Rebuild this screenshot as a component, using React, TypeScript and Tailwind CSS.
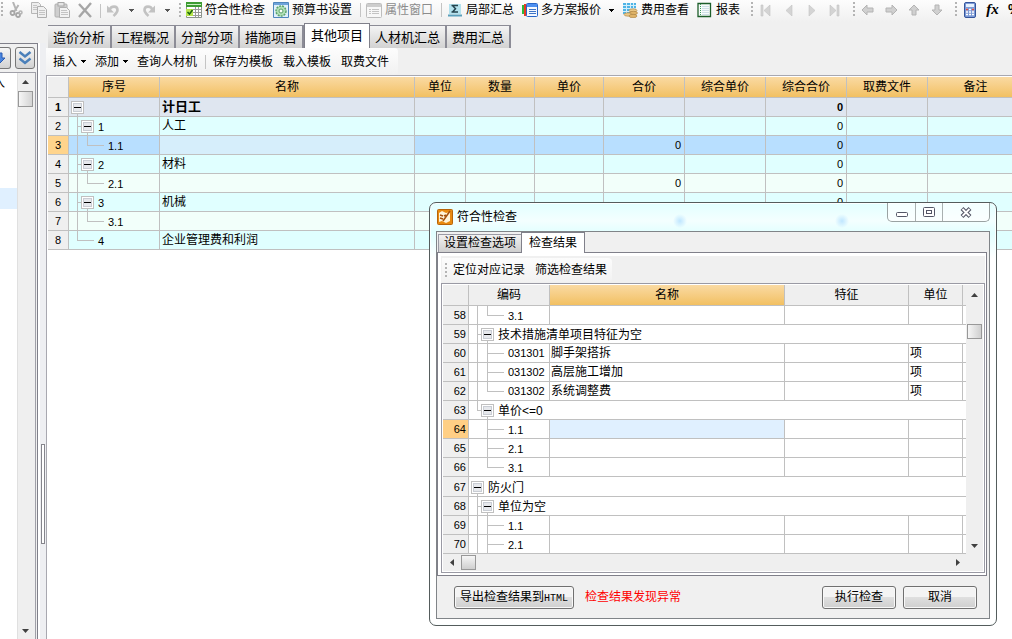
import React, { useState } from 'react';

interface CostRow {
  no: number;
  guides: string;
  toggle: boolean;
  code: string;
  name: string;
  total?: string;
  compositeTotal: string;
  style: 'head' | 'group' | 'selected' | 'item';
}

interface CheckRow {
  no: number;
  guides: string;
  toggle: boolean;
  code: string;
  name?: string;
  unit?: string;
}

const costRows: CostRow[] = [
  { no: 1, guides: '', toggle: true, code: '', name: '计日工', compositeTotal: '0', style: 'head' },
  { no: 2, guides: 'T', toggle: true, code: '1', name: '人工', compositeTotal: '0', style: 'group' },
  { no: 3, guides: '|L', toggle: false, code: '1.1', name: '', total: '0', compositeTotal: '0', style: 'selected' },
  { no: 4, guides: 'T', toggle: true, code: '2', name: '材料', compositeTotal: '0', style: 'group' },
  { no: 5, guides: '|L', toggle: false, code: '2.1', name: '', total: '0', compositeTotal: '0', style: 'item' },
  { no: 6, guides: 'T', toggle: true, code: '3', name: '机械', compositeTotal: '0', style: 'group' },
  { no: 7, guides: '|L', toggle: false, code: '3.1', name: '', total: '0', compositeTotal: '0', style: 'item' },
  { no: 8, guides: 'L', toggle: false, code: '4', name: '企业管理费和利润', compositeTotal: '0', style: 'group' },
];

const checkRows: CheckRow[] = [
  { no: 58, guides: '|L', toggle: false, code: '3.1' },
  { no: 59, guides: 'T', toggle: true, code: '技术措施清单项目特征为空' },
  { no: 60, guides: '|T', toggle: false, code: '031301', name: '脚手架搭拆', unit: '项' },
  { no: 61, guides: '|T', toggle: false, code: '031302', name: '高层施工增加', unit: '项' },
  { no: 62, guides: '|L', toggle: false, code: '031302', name: '系统调整费', unit: '项' },
  { no: 63, guides: 'L', toggle: true, code: '单价<=0' },
  { no: 64, guides: ' T', toggle: false, code: '1.1' },
  { no: 65, guides: ' T', toggle: false, code: '2.1' },
  { no: 66, guides: ' L', toggle: false, code: '3.1' },
  { no: 67, guides: '', toggle: true, code: '防火门' },
  { no: 68, guides: 'T', toggle: true, code: '单位为空' },
  { no: 69, guides: '|T', toggle: false, code: '1.1' },
  { no: 70, guides: '|T', toggle: false, code: '2.1' },
];

const tabs = ['造价分析', '工程概况', '分部分项', '措施项目', '其他项目', '人材机汇总', '费用汇总'];

const costHeaders = ['序号', '名称', '单位', '数量', '单价', '合价', '综合单价', '综合合价', '取费文件', '备注'];

const getRowColor = (style: CostRow['style']) => {
  switch (style) {
    case 'head':
      return 'bg-[#dfe6f0] font-bold';
    case 'selected':
      return 'bg-[#b8dfff]';
    case 'item':
      return 'bg-[#f2fffa]';
    default:
      return 'bg-[#e0ffff]';
  }
};

const ORANGE = 'bg-linear-to-b from-[#fadaa2] to-[#f2c061]';
const CELL = 'border-r border-b border-[#c0c0c0] p-0 leading-[18px] whitespace-nowrap';

/* Guide lines and expander of one tree node, one guide every 10px */
const TreeLines: React.FC<{ guides: string; toggle: boolean }> = ({ guides, toggle }) => {
  const depth = guides.length;
  const cx = 8 + depth * 10;
  return (
    <svg width={19 + depth * 10} height="18" className="shrink-0" shapeRendering="crispEdges">
      {guides.split('').map((g, i) => {
        const x = 8 + i * 10;
        const end = toggle ? x + 4 : x + 16;
        return (
          <g key={i} fill="#c0c0c0">
            {g !== ' ' && <rect x={x} y="0" width="1" height={g === 'L' ? 10 : 18} />}
            {(g === 'L' || g === 'T') && <rect x={x} y="9" width={end - x + 1} height="1" />}
          </g>
        );
      })}
      {toggle && (
        <g>
          <rect x={cx} y="15" width="1" height="3" fill="#c0c0c0" />
          <rect x={cx - 6} y="3" width="13" height="13" fill="#c0c0c0" />
          <rect x={cx - 5} y="4" width="11" height="11" fill="#fff" />
          <rect x={cx - 4} y="5" width="9" height="9" fill="#c9cdd4" />
          <rect x={cx - 3} y="6" width="7" height="7" fill="#e6e8ec" />
          <rect x={cx - 3} y="9" width="7" height="1" fill="#000" />
        </g>
      )}
    </svg>
  );
};

const Caret = () => (
  <svg width="5" height="3" shapeRendering="crispEdges">
    <path d="M0 0h5v1H4v1H3v1H2V2H1V1H0z" fill="currentColor" />
  </svg>
);

const ScrollArrow: React.FC<{ dir: 'up' | 'down' | 'left' | 'right' }> = ({ dir }) => {
  const paths = { up: 'M1 6l3.5-4L8 6z', down: 'M1 3l3.5 4L8 3z', left: 'M6 1L2 4.5 6 8z', right: 'M3 1l4 3.5L3 8z' };
  return (
    <svg width="9" height="9" viewBox="0 0 9 9">
      <path d={paths[dir]} fill="#404040" />
    </svg>
  );
};

const Grip = () => (
  <svg width="4" height="18" className="shrink-0 text-[#b4b4b4]" shapeRendering="crispEdges">
    {[2, 6, 10, 14].map((y) => (
      <rect key={y} x="1" y={y} width="2" height="2" fill="currentColor" />
    ))}
  </svg>
);

const Separator = () => <div className="ml-1 mr-px h-3.5 w-px shrink-0 bg-[#c4c4c4]" />;

const IconButton: React.FC<{ label: string; children: React.ReactNode }> = ({ label, children }) => (
  <button aria-label={label} className="flex h-5 w-[23px] shrink-0 items-center justify-center">
    {children}
  </button>
);

const ToolItem: React.FC<{ label: string; icon: React.ReactNode; disabled?: boolean; menu?: boolean }> = ({
  label,
  icon,
  disabled,
  menu,
}) => (
  <button
    disabled={disabled}
    className={`flex h-5 shrink-0 items-center gap-[3px] px-1 leading-5 whitespace-nowrap ${disabled ? 'text-[#8c8c8c]' : ''}`}
  >
    {icon}
    {label}
    {menu && (
      <span className="flex w-2.5 justify-end">
        <Caret />
      </span>
    )}
  </button>
);

const Icon: React.FC<{ children: React.ReactNode }> = ({ children }) => (
  <svg width="16" height="16" viewBox="0 0 16 16" fill="none" className="shrink-0">
    {children}
  </svg>
);

const CutIcon = () => (
  <Icon>
    <path d="M5 0l3.500 9M10.500 3L6 10" stroke="#b4b4b4" strokeWidth="2" />
    <circle cx="4.500" cy="11" r="2" stroke="#a6a6a6" strokeWidth="1.800" />
    <circle cx="10" cy="13" r="2" stroke="#a6a6a6" strokeWidth="1.800" />
    <circle cx="12.500" cy="10.500" r="1.500" stroke="#b4b4b4" strokeWidth="1.500" />
  </Icon>
);

const CopyIcon = () => (
  <Icon>
    <path d="M.5.5h7l2 2v9h-9z" fill="#ededed" stroke="#b6b6b6" />
    <path d="M6.500 4.500h6l3 3v8h-9z" fill="#f0f0f0" stroke="#aeaeae" />
    <path d="M8 8.500h6M8 10.500h6M8 12.500h6M2 3.500h4M2 5.500h4M2 7.500h4" stroke="#c4c4c4" />
  </Icon>
);

const PasteIcon = () => (
  <Icon>
    <rect x="1" y="2" width="12" height="13" rx="1" fill="#cfcfcf" stroke="#b0b0b0" />
    <rect x="4" y=".5" width="6" height="3.500" fill="#e4e4e4" stroke="#a8a8a8" />
    <path d="M5.500 5.500h7l3 3v7h-10z" fill="#f2f2f2" stroke="#b0b0b0" />
    <path d="M7 8.500h6M7 10.500h7M7 12.500h7" stroke="#c4c4c4" />
  </Icon>
);

const DeleteIcon = () => (
  <Icon>
    <path d="M2 2l12 13M14 1L2 15" stroke="#a6a6a6" strokeWidth="2.400" />
  </Icon>
);

const UndoIcon: React.FC<{ flip?: boolean }> = ({ flip }) => (
  <svg width="16" height="16" viewBox="0 0 16 16" fill="none" className={flip ? '-scale-x-100' : ''}>
    <path d="M2 3.500v7h7z" fill="#c2c2c2" />
    <path d="M4.500 8C6 3.500 12.500 3.500 12.500 8c0 2.500-2 4-4 6" stroke="#c2c2c2" strokeWidth="2.600" />
  </svg>
);

const CheckTableIcon = () => (
  <Icon>
    <path d="M.5.5h15v15H.5z" fill="#fff" stroke="#8c948c" />
    <path d="M0 0h16v5H0z" fill="#3c9b32" />
    <path d="M1 2.500h14" stroke="#cdeec4" />
    <path d="M6 7.500h9M6 10.500h9M6 13.500h9M9.500 5v10M12.500 5v10" stroke="#9a9a9a" />
    <path d="M0 7h7v7H0z" fill="#b6e64c" />
    <path d="M1.500 10l2 2 3-4" stroke="#1a6410" strokeWidth="1.500" />
  </Icon>
);

const SettingsIcon = () => (
  <Icon>
    <path d="M.5.5h15v15H.5z" fill="#e0f0fb" stroke="#4f86bc" />
    <path d="M1 1h14v2H1z" fill="#6ea3da" />
    <circle cx="8" cy="9" r="5" fill="#b2dfb6" stroke="#5ba46c" strokeDasharray="2 1" strokeWidth="1.500" />
    <circle cx="8" cy="9" r="2" fill="#fff" stroke="#58a068" />
  </Icon>
);

const PropertyIcon = () => (
  <Icon>
    <rect x=".5" y="1.500" width="15" height="14" rx="1" fill="#f8f8f8" stroke="#bdbdbd" />
    <path d="M1 2h14v3H1z" fill="#cdcdcd" />
    <path d="M3 7.500h2M6 7.500h7M3 9.500h2M6 9.500h7M3 11.500h2M6 11.500h7" stroke="#c4c4c4" />
  </Icon>
);

const SumIcon = () => (
  <Icon>
    <path d="M2 2h12v10H2z" fill="#b4e2ee" />
    <path d="M1 12.500h14v2H1z" fill="#5aa0bc" />
    <path d="M4.500 3.500h6.500M4.500 10h6.500M5.500 3.500l3 3.300-3 3.200" stroke="#24434e" strokeWidth="1.500" />
  </Icon>
);

const PlansIcon = () => (
  <Icon>
    <path d="M0 3h2v9H0z" fill="#2fb93a" />
    <path d="M2 2h2v12H2z" fill="#e53a26" />
    <path d="M4 2h1v12H4z" fill="#f0c020" />
    <rect x="4.500" y="1.500" width="11" height="13" rx="1" fill="#f4f8ff" stroke="#2765c8" />
    <path d="M5 2h10v3H5z" fill="#4d8ff0" />
    <path d="M7 7.500h7M7 9.500h7M7 11.500h7" stroke="#3f74c6" />
  </Icon>
);

const CoinsIcon = () => (
  <Icon>
    <path d="M1 1h13v11H1z" fill="#4fb4e6" />
    <path d="M1 3.500h13M1 6.500h13M1 9.500h13M4.500 1v11M8.500 1v11M11.500 1v11" stroke="#d4effb" />
    <ellipse cx="11" cy="8.500" rx="4" ry="1.700" fill="#ecc988" stroke="#a87e3c" strokeWidth=".6" />
    <ellipse cx="11.500" cy="11" rx="4" ry="1.700" fill="#e0b468" stroke="#a87e3c" strokeWidth=".6" />
    <ellipse cx="6" cy="12.500" rx="4" ry="1.700" fill="#ecc988" stroke="#a87e3c" strokeWidth=".6" />
    <ellipse cx="11" cy="14" rx="4" ry="1.700" fill="#e0b468" stroke="#a87e3c" strokeWidth=".6" />
  </Icon>
);

const ReportIcon = () => (
  <Icon>
    <path d="M1 1.500h12.500v13H1z" fill="#f6fcfa" stroke="#1d5e2a" strokeWidth="1.300" />
    <path d="M3.500 2v12" stroke="#3c9b5a" strokeDasharray="1 1" />
    <path d="M5 4.500h7M5 6.500h7M5 8.500h7M5 10.500h7M5 12.500h7" stroke="#cfdfe8" />
  </Icon>
);

const navIcons = [
  { label: 'First', d: 'M3 3h2v11H3zM12 3v11L6 8.5z' },
  { label: 'Previous', d: 'M11 3v11L5 8.5z' },
  { label: 'Next', d: 'M5 3v11l6-5.500z' },
  { label: 'Last', d: 'M3 3v11l6-5.500zM10 3h2v11h-2z' },
];

const moveIcons = [
  { label: 'Left', d: 'M7 3v3h6v4H7v3L2 8z' },
  { label: 'Right', d: 'M9 3v3H3v4h6v3l5-5z' },
  { label: 'Up', d: 'M3 8h3v5h4V8h3L8 3z' },
  { label: 'Down', d: 'M3 8h3V3h4v5h3l-5 5z' },
];

const MainToolbar = () => (
  <div className="flex h-[22px] shrink-0 items-start overflow-hidden bg-linear-to-b from-[#fdfdfd] to-[#f0f0f0]">
    <Grip />
    <IconButton label="Cut"><CutIcon /></IconButton>
    <IconButton label="Copy"><CopyIcon /></IconButton>
    <IconButton label="Paste"><PasteIcon /></IconButton>
    <IconButton label="Delete"><DeleteIcon /></IconButton>
    <div className="mx-1 mt-1 h-3.5 w-px shrink-0 bg-[#c4c4c4]" />
    <button aria-label="Undo" className="flex h-5 shrink-0 items-center">
      <UndoIcon />
      <span className="flex w-5 justify-center text-[#555]"><Caret /></span>
    </button>
    <button aria-label="Redo" className="flex h-5 shrink-0 items-center">
      <UndoIcon flip />
      <span className="flex w-5 justify-center text-[#555]"><Caret /></span>
    </button>
    <div className="ml-px flex h-5 shrink-0 items-center">
      <Grip />
      <ToolItem label="符合性检查" icon={<CheckTableIcon />} />
      <ToolItem label="预算书设置" icon={<SettingsIcon />} />
      <Separator />
      <ToolItem label="属性窗口" icon={<PropertyIcon />} disabled />
      <Separator />
      <ToolItem label="局部汇总" icon={<SumIcon />} />
      <ToolItem label="多方案报价" icon={<PlansIcon />} menu />
      <ToolItem label="费用查看" icon={<CoinsIcon />} />
      <ToolItem label="报表" icon={<ReportIcon />} />
    </div>
    <div className="ml-1.5 flex shrink-0">
      <Grip />
      {navIcons.map((icon) => (
        <IconButton key={icon.label} label={icon.label}>
          <Icon><path d={icon.d} fill="#d4d4d4" stroke="#c2c2c2" strokeWidth=".6" /></Icon>
        </IconButton>
      ))}
    </div>
    <div className="ml-1.5 flex shrink-0">
      <Grip />
      {moveIcons.map((icon) => (
        <IconButton key={icon.label} label={icon.label}>
          <Icon><path d={icon.d} fill="#d0d0d0" stroke="#b4b4b4" /></Icon>
        </IconButton>
      ))}
    </div>
    <div className="ml-1.5 flex shrink-0">
      <Grip />
      <IconButton label="Calculator">
        <Icon>
          <rect x="2.500" y=".5" width="11" height="15" rx="1.500" fill="#7d9bd6" stroke="#34559c" />
          <path d="M4 2h8v3H4z" fill="#e6f2ff" />
          <path d="M4 7.500h8M4 10h8M4 12.500h8" stroke="#fff" strokeWidth="1.500" strokeDasharray="2 1" />
          <path d="M4 7.500h2M10 7.500h2" stroke="#e24a3c" strokeWidth="1.500" />
        </Icon>
      </IconButton>
      <button className="h-[18px] w-[23px] shrink-0 font-['Liberation_Serif',serif] text-[15px] leading-[18px] font-bold italic">
        fx
      </button>
      <button className="h-[18px] shrink-0 pl-1 text-sm leading-[14px] font-bold">%</button>
    </div>
  </div>
);

const SidePanel = () => (
  <aside className="mt-[21px] flex w-[38px] shrink-0 flex-col border-t border-r border-[#80808a] bg-[#f0f0f0]">
    <div className="flex h-7 items-center gap-1 overflow-hidden">
      <button aria-label="Move down" className="flex h-[22px] w-[11px] items-center justify-end overflow-hidden rounded-r-[3px] border border-l-0 border-[#777] bg-linear-to-b from-[#f6f6f6] to-[#d2d2d2]">
        <svg width="10" height="12" viewBox="0 0 10 12">
          <path d="M-3 1h5v5h3L0 11-6 6z" fill="#4a86e0" stroke="#2a5cb4" />
        </svg>
      </button>
      <button aria-label="Collapse all" className="flex h-[22px] w-5 items-center justify-center rounded-[3px] border border-[#777] bg-linear-to-b from-[#f6f6f6] to-[#d2d2d2]">
        <svg width="14" height="16" viewBox="0 0 14 16" fill="none">
          <path d="M1.500 2L7 6.500 12.500 2M1.500 8.500L7 13l5.500-4.500" stroke="#4b80ba" strokeWidth="2.500" />
        </svg>
      </button>
    </div>
    <div className="mr-px flex min-h-0 flex-1 border-t border-r border-[#a0a0a8]">
      <div className="flex-1 bg-white">
        <div className="flex w-[5px] justify-end overflow-hidden pt-0.5">入</div>
        <div className="mt-[97px] h-[21px] bg-[#e0f0ff]" />
      </div>
      <div className="flex w-[18px] flex-col items-start border-l border-[#e0e0e0] bg-[#efefef]">
        <button aria-label="Scroll up" className="flex h-[18px] w-[15px] items-center justify-center"><ScrollArrow dir="up" /></button>
        <div className="h-4 w-[15px] border border-[#989898] bg-linear-to-r from-[#f6f6f6] to-[#d4d4d4]" />
        <div className="flex-1" />
        <button aria-label="Scroll down" className="flex h-[18px] w-[15px] items-center justify-center"><ScrollArrow dir="down" /></button>
      </div>
    </div>
  </aside>
);

const CostTable = () => (
  <div className="min-h-0 flex-1 overflow-hidden border-t border-l border-[#a8a8b0] bg-white pt-px pl-px">
    <table className="w-[976px] table-fixed border-separate border-spacing-0">
      <colgroup>
        <col className="w-[21px]" />
        <col className="w-[91px]" />
        <col />
        <col className="w-[51px]" />
        <col className="w-[69px]" />
        <col className="w-[69px]" />
        <col className="w-[81px]" />
        <col className="w-[81px]" />
        <col className="w-[81px]" />
        <col className="w-[81px]" />
        <col className="w-[96px]" />
      </colgroup>
      <thead>
        <tr className="h-[21px]">
          <th className={`${CELL} bg-[#efefef]`} />
          {costHeaders.map((header) => (
            <th key={header} className={`${CELL} ${ORANGE} font-normal`}>{header}</th>
          ))}
        </tr>
      </thead>
      <tbody>
        {costRows.map((row) => (
          <tr key={row.no} className={`h-[19px] ${getRowColor(row.style)}`}>
            <td className={`${CELL} text-center text-[11px] ${row.style === 'selected' ? 'bg-[#ffd48c]' : 'bg-[#efefef]'}`}>
              {row.no}
            </td>
            <td className={CELL}>
              <div className="flex h-[18px] overflow-hidden text-[11px] leading-5">
                <TreeLines guides={row.guides} toggle={row.toggle} />
                {row.code}
              </div>
            </td>
            <td className={`${CELL} pl-0.5 ${row.style === 'selected' ? 'bg-[#d6eefb]' : ''} ${row.style === 'head' ? 'text-[13px]' : ''}`}>
              {row.name}
            </td>
            <td className={CELL} />
            <td className={CELL} />
            <td className={CELL} />
            <td className={`${CELL} pr-[3px] text-right text-[11px]`}>{row.total}</td>
            <td className={CELL} />
            <td className={`${CELL} pr-[3px] text-right text-[11px]`}>{row.compositeTotal}</td>
            <td className={CELL} />
            <td className={CELL} />
          </tr>
        ))}
      </tbody>
    </table>
  </div>
);

const CheckTable = () => (
  <table className="w-full table-fixed border-separate border-spacing-0 bg-white">
    <colgroup>
      <col className="w-[26px]" />
      <col className="w-[81px]" />
      <col />
      <col className="w-[124px]" />
      <col className="w-[54px]" />
      <col className="w-[3px]" />
    </colgroup>
    <thead>
      <tr className="h-[21px]">
        <th className={`${CELL} bg-[#efefef]`} />
        <th className={`${CELL} bg-[#efefef] font-normal`}>编码</th>
        <th className={`${CELL} ${ORANGE} font-normal`}>名称</th>
        <th className={`${CELL} bg-[#efefef] font-normal`}>特征</th>
        <th className={`${CELL} bg-[#efefef] font-normal`}>单位</th>
        <th className="border-b border-[#c0c0c0] bg-[#efefef] p-0" />
      </tr>
    </thead>
    <tbody>
      {checkRows.map((row) => (
        <tr key={row.no} className={row.guides === '' ? 'h-5' : 'h-[19px]'}>
          <td className={`${CELL} pr-0.5 text-right text-[11px] ${row.no === 64 ? 'bg-[#ffcf85]' : 'bg-[#efefef]'}`}>
            {row.no}
          </td>
          {row.toggle ? (
            <td colSpan={5} className="border-b border-[#c0c0c0] p-0">
              <div className="flex h-[18px] leading-5">
                <TreeLines guides={row.guides} toggle />
                {row.code}
              </div>
            </td>
          ) : (
            <>
              <td className={CELL}>
                <div className={`flex h-[18px] overflow-hidden text-[11px] ${row.name ? 'leading-[18px]' : 'leading-5'}`}>
                  <TreeLines guides={row.guides} toggle={false} />
                  {row.code}
                </div>
              </td>
              <td className={`${CELL} pl-px ${row.no === 64 ? 'bg-[#e0f0ff]' : ''}`}>{row.name}</td>
              <td className={CELL} />
              <td className={`${CELL} pl-px`}>{row.unit}</td>
              <td className="border-b border-[#c0c0c0] p-0" />
            </>
          )}
        </tr>
      ))}
    </tbody>
  </table>
);

const BUTTON =
  'h-[23px] rounded-[3px] border border-[#707070] bg-linear-to-b from-[#f4f4f4] from-50% via-[#dfdfdf] via-50% to-[#cfcfcf] leading-5 whitespace-nowrap shadow-[inset_0_0_0_1px_#f8f8f8]';

const CheckDialog = () => (
  <div
    role="dialog"
    aria-labelledby="check-title"
    className="absolute top-[202px] left-[429px] w-[568px] rounded-[7px] border border-[#555c5c] bg-[radial-gradient(circle_at_250px_18px,#bfe6ff,transparent_7px),radial-gradient(circle_at_412px_18px,#bfe6ff,transparent_7px),linear-gradient(#e2ffff,#f4ffff_18px,#e2ffff_30px,#fff_56px)] px-1.5 pb-1.5 shadow-[inset_0_0_0_1px_#fbffff]"
  >
    {/* Title bar */}
    <div className="flex h-7 items-start justify-between">
      <div className="flex items-center gap-1 pt-1.5 pl-px">
        <Icon>
          <rect x=".5" y=".5" width="15" height="15" rx="1" fill="#e88a10" stroke="#b86408" />
          <path d="M2 4l3-2 4 2 4-1v9l-4 2-4-2-3 1z" fill="#fff4d8" />
          <path d="M3 6l3 1M3 9l3 1M7 7l2-1M6 12l7-10" stroke="#a4500c" strokeWidth="1.500" />
        </Icon>
        <h2 id="check-title" className="leading-4">符合性检查</h2>
      </div>
      <div className="flex h-[19px] overflow-hidden rounded-b-[5px] border border-t-0 border-[#9aa2a2] bg-white/60">
        <button aria-label="Minimize" className="flex w-7 items-center justify-center border-r border-[#a9b0b0]">
          <svg width="12" height="12" viewBox="0 0 12 12">
            <rect x=".5" y="6.500" width="11" height="4" rx="1" fill="#fff" stroke="#535666" />
          </svg>
        </button>
        <button aria-label="Maximize" className="flex w-[27px] items-center justify-center border-r border-[#a9b0b0]">
          <svg width="12" height="10" viewBox="0 0 12 10">
            <rect x=".5" y=".5" width="11" height="9" rx="1" fill="#fff" stroke="#535666" />
            <rect x="3.500" y="3.500" width="5" height="3" fill="#fff" stroke="#535666" />
          </svg>
        </button>
        <button aria-label="Close" className="flex w-[46px] items-center justify-center">
          <svg width="12" height="11" viewBox="0 0 12 11" fill="none">
            <path d="M2 1.500l8 8M10 1.500l-8 8" stroke="#535666" strokeWidth="4" />
            <path d="M2.500 2l7 7M9.500 2l-7 7" stroke="#fff" strokeWidth="1.800" />
          </svg>
        </button>
      </div>
    </div>

    {/* Client area */}
    <div className="border border-[#808488] bg-[#f0f0f0]">
      <div className="flex h-5 items-end pl-px" role="tablist">
        <button role="tab" aria-selected="false" className="h-[18px] border-t border-l border-[#9a9aa4] bg-linear-to-b from-[#f2f2f2] to-[#cfcfcf] px-[5px] leading-[17px]">
          设置检查选项
        </button>
        <button role="tab" aria-selected="true" className="-mb-px h-[21px] border-x border-t border-[#80808a] bg-white px-[7px] leading-[18px]">
          检查结果
        </button>
      </div>
      <div className="mr-0.5 border border-[#80808a] bg-white pt-[3px] pr-px pb-0.5 pl-[3px]">
        <div className="flex h-[27px] items-center bg-[#f0f0f0] pl-px">
          <div className="flex h-6 items-center rounded-r-sm bg-linear-to-b from-[#fcfcfc] to-[#f2f2f2] pl-0.5">
            <Grip />
            <button className="px-[5px] leading-5">定位对应记录</button>
            <button className="px-[5px] leading-5">筛选检查结果</button>
          </div>
        </div>
        <div className="border border-[#9a9aa4] p-px">
          <div className="flex">
            <div className="min-w-0 flex-1"><CheckTable /></div>
            <div className="flex w-[17px] flex-col items-center bg-[#efefef]">
              <button aria-label="Scroll up" className="flex h-5 items-center"><ScrollArrow dir="up" /></button>
              <div className="mt-[19px] h-[15px] w-[15px] border border-[#989898] bg-linear-to-r from-[#f6f6f6] to-[#cfcfcf]" />
              <div className="flex-1" />
              <button aria-label="Scroll down" className="flex h-[17px] items-center"><ScrollArrow dir="down" /></button>
            </div>
          </div>
          <div className="flex h-[17px] bg-[#efefef]">
            <div className="flex flex-1 items-center">
              <button aria-label="Scroll left" className="flex w-[18px] justify-center"><ScrollArrow dir="left" /></button>
              <div className="h-[15px] w-[15px] border border-[#989898] bg-linear-to-b from-[#f6f6f6] to-[#cfcfcf]" />
              <div className="flex-1" />
              <button aria-label="Scroll right" className="flex w-[17px] justify-center"><ScrollArrow dir="right" /></button>
            </div>
            <div className="w-[17px]" />
          </div>
        </div>
      </div>
      <div className="flex h-[42px] items-center pr-3 pl-[17px]">
        <button className={`${BUTTON} w-[120px]`}>
          导出检查结果到<span className="font-['Liberation_Mono',monospace] text-[10px]">HTML</span>
        </button>
        <span className="ml-[11px] text-[#ff0000]">检查结果发现异常</span>
        <div className="ml-auto flex gap-[7px]">
          <button className={`${BUTTON} w-[74px]`}>执行检查</button>
          <button className={`${BUTTON} w-[74px]`}>取消</button>
        </div>
      </div>
    </div>
  </div>
);

export const App: React.FC = () => {
  const [activeTab, setActiveTab] = useState('其他项目');

  return (
    <div className="relative flex h-screen flex-col overflow-hidden bg-[#f0f0f0] font-['Liberation_Sans','Noto_Sans_CJK_SC',sans-serif] text-xs text-black">
      <MainToolbar />
      <div className="flex min-h-0 flex-1">
        <SidePanel />
        {/* Splitter */}
        <div className="mt-[21px] flex w-2 shrink-0 flex-col items-center border-l-2 border-white bg-[#eeeff2]">
          <div className="mt-[401px] h-[100px] w-1 border border-[#85858c] bg-white" />
        </div>
        <main className="flex min-w-0 flex-1 flex-col">
          <div className="flex h-[26px] shrink-0 items-end pl-0.5" role="tablist">
            {tabs.map((tab) => (
              <button
                key={tab}
                role="tab"
                aria-selected={tab === activeTab}
                onClick={() => setActiveTab(tab)}
                className={`border-t whitespace-nowrap text-[13px] ${
                  tab === activeTab
                    ? 'h-[25px] border-x border-[#80808a] bg-white px-1.5 leading-[22px]'
                    : 'h-[23px] border-r-2 border-[#8c8c96] bg-linear-to-b from-[#f4f4f4] to-[#d2d2d2] px-[5px] leading-[21px]'
                }`}
              >
                {tab}
              </button>
            ))}
          </div>
          <div className="flex h-[27px] shrink-0 items-center self-start rounded-r-sm bg-linear-to-b from-[#fdfdfd] to-[#f1f1f1] pr-1 pl-0.5">
            <button className="flex items-center gap-1 px-[5px] leading-5">插入<Caret /></button>
            <button className="flex items-center gap-1 px-1 leading-5">添加<Caret /></button>
            <button className="px-[5px] leading-5">查询人材机</button>
            <div className="ml-[3px] mr-0.5 h-3.5 w-px bg-[#c4c4c4]" />
            <button className="px-[5px] leading-5">保存为模板</button>
            <button className="px-[5px] leading-5">载入模板</button>
            <button className="px-[5px] leading-5">取费文件</button>
          </div>
          <CostTable />
        </main>
      </div>
      <CheckDialog />
    </div>
  );
};

export default App;
